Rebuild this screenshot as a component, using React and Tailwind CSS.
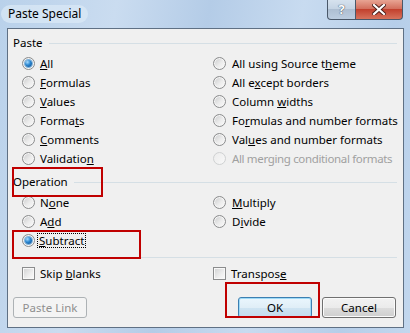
import React from "react";

const Radio = ({ checked, disabled }) => (
  <span
    className={`flex items-center justify-center w-[13px] h-[13px] shrink-0 rounded-full border ${
      disabled
        ? "border-[#cfd1d2] bg-[linear-gradient(135deg,#ececec,#f8f8f8)]"
        : "border-[#8b8c8d] bg-[linear-gradient(135deg,#c9cacb,#ececec_55%,#fbfbfb)] shadow-[inset_0_0_0_1px_#f6f6f6]"
    }`}
  >
    {checked && (
      <span className="w-[7px] h-[7px] rounded-full bg-[radial-gradient(circle_at_35%_30%,#a8dcff_0%,#2a86d0_45%,#0a4a8c_100%)] shadow-[0_0_0_1px_#7fb2da]" />
    )}
  </span>
);

const Check = () => (
  <span className="w-[13px] h-[13px] shrink-0 border border-[#8b8c8d] bg-[linear-gradient(135deg,#d0d1d2,#eeeeee_60%,#fbfbfb)] shadow-[inset_0_0_0_1px_#f8f8f8]" />
);

const Row = ({ checked, disabled, gap = "gap-[5px]", children }) => (
  <div className={`flex items-center h-[19px] whitespace-nowrap ${gap}`}>
    <Radio checked={checked} disabled={disabled} />
    <span className={disabled ? "text-[#a0a0a0] tracking-[-0.35px]" : "text-black"}>{children}</span>
  </div>
);

const GroupHeader = ({ children }) => (
  <div className="flex items-center h-[14px] pl-[5px] pr-[6px]">
    <span className="text-black">{children}</span>
    <span className="flex-1 ml-[6px] h-px bg-[#d5dfe5]" />
  </div>
);

const Button = ({ kind, children }) => {
  const base = "flex items-center justify-center w-[74px] h-[21px] rounded-[3px] border";
  if (kind === "disabled")
    return <div className={`${base} border-[#adb2b5] bg-[#f4f4f4] text-[#8f8f8f]`}>{children}</div>;
  if (kind === "default")
    return (
      <div className={`${base} border-[#3c7fb1] bg-[linear-gradient(#eaf6fd_0%,#e0eef7_50%,#cfe4f2_50%,#c4dcee_100%)] shadow-[inset_0_0_0_1px_#9edaf7] text-black`}>
        {children}
      </div>
    );
  return (
    <div className={`${base} border-[#707070] bg-[linear-gradient(#f2f2f2_0%,#ebebeb_50%,#dddddd_50%,#cfcfcf_100%)] shadow-[inset_0_0_0_1px_#fbfbfb] text-black`}>
      {children}
    </div>
  );
};

export default function App() {
  return (
    <div className="relative w-[410px] h-[333px] overflow-hidden flex flex-col font-['Noto_Sans',sans-serif] text-[11.5px] leading-none bg-[linear-gradient(100deg,#b9d1ea_0%,#cadcf0_25%,#b4cce7_45%,#c8dbf0_65%,#b6cee9_85%,#c2d7ee_100%)]">
      {/* title bar */}
      <div className="flex items-start justify-between h-[28px]">
        <div className="relative mt-[5px] ml-[1px] px-[7px] h-[18px] flex items-center rounded-full bg-[#dce9f6]/70 text-[12px] text-black">
          Paste Special
        </div>
        <div className="flex mr-[7px] h-[20px]">
          <div className="flex items-center justify-center w-[29px] h-full border border-[#4a5869] border-t-0 rounded-bl-[4px] bg-[linear-gradient(#d6e2ee,#c3d3e3_50%,#aebfd2_50%,#bccde0)] text-[13px] font-bold text-white [text-shadow:0_0_1px_#3b4a5c,0_0_1px_#3b4a5c]">
            ?
          </div>
          <div className="flex items-center justify-center w-[47px] h-full border border-[#4a5869] border-t-0 border-l-0 rounded-br-[4px] bg-[linear-gradient(#e8a493,#d3705e_45%,#c2412e_50%,#d7725c_100%)]">
            <svg width="14" height="11" viewBox="0 0 14 11">
              <path d="M2 1 L12 10 M12 1 L2 10" stroke="#4a1d18" strokeWidth="4" strokeLinecap="square" />
              <path d="M2 1 L12 10 M12 1 L2 10" stroke="#ffffff" strokeWidth="2.2" strokeLinecap="square" />
            </svg>
          </div>
        </div>
      </div>

      {/* client area */}
      <div className="ml-[7px] mr-[6px] h-[300px] border border-[#5f7084] bg-[#f0f0f0] flex flex-col">
        <div className="mt-[7px]">
          <GroupHeader>Paste</GroupHeader>
        </div>
        <div className="mt-[4px] pl-[14px] grid grid-cols-[191px_1fr]">
          <div className="flex flex-col">
            <Row checked><u>A</u>ll</Row>
            <Row><u>F</u>ormulas</Row>
            <Row><u>V</u>alues</Row>
            <Row>Forma<u>t</u>s</Row>
            <Row><u>C</u>omments</Row>
            <Row>Validatio<u>n</u></Row>
          </div>
          <div className="flex flex-col">
            <Row gap="gap-[6px]">All using Source t<u>h</u>eme</Row>
            <Row gap="gap-[6px]">All e<u>x</u>cept borders</Row>
            <Row gap="gap-[6px]">Column <u>w</u>idths</Row>
            <Row gap="gap-[6px]">Fo<u>r</u>mulas and number formats</Row>
            <Row gap="gap-[6px]">Val<u>u</u>es and number formats</Row>
            <Row gap="gap-[6px]" disabled>All merging conditional formats</Row>
          </div>
        </div>

        <div className="mt-[7px]">
          <GroupHeader>Operation</GroupHeader>
        </div>
        <div className="mt-[4px] pl-[14px] grid grid-cols-[191px_1fr]">
          <div className="flex flex-col">
            <Row>N<u>o</u>ne</Row>
            <Row>A<u>d</u>d</Row>
            <Row checked gap="gap-[2px]">
              <span className="inline-block border border-dotted border-black px-[1px] py-[1px]">
                <u>S</u>ubtract
              </span>
            </Row>
          </div>
          <div className="flex flex-col">
            <Row gap="gap-[6px]"><u>M</u>ultiply</Row>
            <Row gap="gap-[6px]">D<u>i</u>vide</Row>
          </div>
        </div>

        <div className="mt-[7px] ml-[5px] mr-[6px] h-px bg-[#d5dfe5]" />

        <div className="mt-[6px] pl-[14px] grid grid-cols-[191px_1fr]">
          <div className="flex items-center h-[19px] gap-[5px]">
            <Check />
            <span>Skip <u>b</u>lanks</span>
          </div>
          <div className="flex items-center h-[19px] gap-[5px]">
            <Check />
            <span>Transpos<u>e</u></span>
          </div>
        </div>

        <div className="mt-[14px] flex items-center pl-[5px] pr-[7px]">
          <Button kind="disabled">Paste Link</Button>
          <div className="flex-1" />
          <Button kind="default">OK</Button>
          <div className="w-[10px]" />
          <Button>Cancel</Button>
        </div>
      </div>

      {/* red highlight boxes */}
      <div className="absolute left-[12px] top-[167px] w-[91px] h-[30px] border-2 border-[#c00000]" />
      <div className="absolute left-[12px] top-[230px] w-[129px] h-[29px] border-2 border-[#c00000]" />
      <div className="absolute left-[225px] top-[282px] w-[95px] h-[36px] border-2 border-[#c00000]" />
    </div>
  );
}
